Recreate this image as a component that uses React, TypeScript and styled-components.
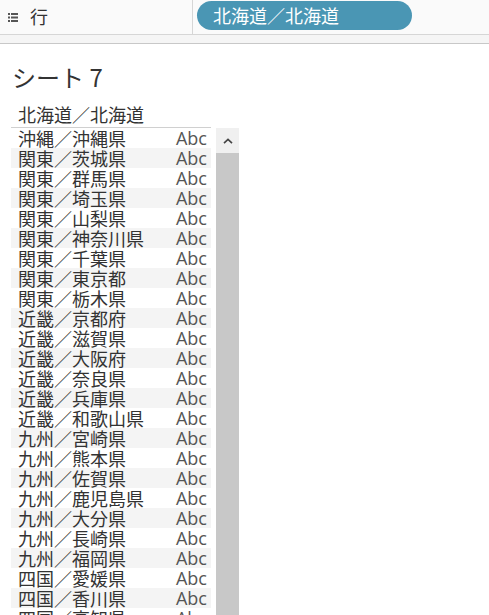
import styled, { createGlobalStyle } from 'styled-components';

const rows = [
    '沖縄／沖縄県',
    '関東／茨城県',
    '関東／群馬県',
    '関東／埼玉県',
    '関東／山梨県',
    '関東／神奈川県',
    '関東／千葉県',
    '関東／東京都',
    '関東／栃木県',
    '近畿／京都府',
    '近畿／滋賀県',
    '近畿／大阪府',
    '近畿／奈良県',
    '近畿／兵庫県',
    '近畿／和歌山県',
    '九州／宮崎県',
    '九州／熊本県',
    '九州／佐賀県',
    '九州／鹿児島県',
    '九州／大分県',
    '九州／長崎県',
    '九州／福岡県',
    '四国／愛媛県',
    '四国／香川県',
    '四国／高知県',
    '四国／徳島県',
];

export default function App() {
    return (
        <>
            <Global />
            <Page>
                <Shelf>
                    <ShelfLabel>
                        <svg width="10" height="9" viewBox="0 0 10 9">
                            <rect x="0" y="0" width="2" height="2" fill="#555" />
                            <rect x="3" y="0" width="7" height="2" fill="#555" />
                            <rect x="0" y="3.5" width="2" height="2" fill="#555" />
                            <rect x="3" y="3.5" width="7" height="2" fill="#555" />
                            <rect x="0" y="7" width="2" height="2" fill="#555" />
                            <rect x="3" y="7" width="7" height="2" fill="#555" />
                        </svg>
                        <span>行</span>
                    </ShelfLabel>
                    <ShelfBody>
                        <Pill>北海道／北海道</Pill>
                    </ShelfBody>
                </Shelf>
                <Band />
                <Sheet>
                    <Title>シート 7</Title>
                    <TableWrap>
                        <Table>
                            <Header>北海道／北海道</Header>
                            {rows.map((r, i) => (
                                <Row key={r} striped={i % 2 === 1}>
                                    <Name>{r}</Name>
                                    <Abc>Abc</Abc>
                                </Row>
                            ))}
                        </Table>
                        <Scroll>
                            <ScrollButton>
                                <svg width="10" height="6" viewBox="0 0 10 6">
                                    <path d="M1 5.2 L5 1.4 L9 5.2" fill="none" stroke="#444" strokeWidth="1.6" />
                                </svg>
                            </ScrollButton>
                            <Thumb />
                        </Scroll>
                    </TableWrap>
                </Sheet>
            </Page>
        </>
    );
}

const Global = createGlobalStyle`
    html, body {
        margin: 0;
        padding: 0;
        background: #fff;
        overflow: hidden;
    }
    body {
        font-family: "Noto Sans CJK JP", "Noto Sans", sans-serif;
        color: #333;
    }
`;

const Page = styled.div`
    width: 489px;
    height: 615px;
    overflow: hidden;
    display: flex;
    flex-direction: column;
`;

const Shelf = styled.div`
    height: 34px;
    flex-shrink: 0;
    display: flex;
    background: #fafafa;
    border-bottom: 1px solid #d6d6d6;
`;

const ShelfLabel = styled.div`
    width: 193px;
    border-right: 1px solid #d6d6d6;
    display: flex;
    align-items: center;
    gap: 12px;
    padding-left: 8px;
    box-sizing: border-box;
    font-size: 18px;
    color: #333;

    span {
        line-height: 1;
        margin-top: -2px;
    }
`;

const ShelfBody = styled.div`
    flex: 1;
    padding: 1px 0 0 4px;
`;

const Pill = styled.div`
    width: 215px;
    height: 29px;
    border-radius: 15px;
    background: #4a96b4;
    color: #fff;
    font-size: 18px;
    line-height: 29px;
    padding-left: 16px;
    box-sizing: border-box;
`;

const Band = styled.div`
    height: 8px;
    flex-shrink: 0;
    background: #f5f5f5;
    border-bottom: 1px solid #c8c8c8;
`;

const Sheet = styled.div`
    padding: 17px 0 0 11px;
`;

const Title = styled.div`
    font-size: 24px;
    line-height: 32px;
    height: 41px;
    color: #333;
    padding-left: 1px;
`;

const TableWrap = styled.div`
    display: flex;
    align-items: flex-start;
`;

const Table = styled.div`
    width: 200px;
`;

const Header = styled.div`
    font-size: 18px;
    line-height: 20px;
    height: 24px;
    padding-left: 7px;
    color: #333;
    border-bottom: 1px solid #d0d0d0;
    box-sizing: border-box;
    margin-top: 2px;
`;

const Row = styled.div<{ striped: boolean }>`
    height: 20px;
    display: flex;
    justify-content: space-between;
    align-items: center;
    background: ${({ striped }) => (striped ? '#f4f4f4' : '#fff')};
    padding: 0 4px 0 7px;
`;

const Name = styled.span`
    font-size: 18px;
    line-height: 20px;
    color: #333;
`;

const Abc = styled.span`
    font-family: "Open Sans", "Noto Sans", sans-serif;
    font-size: 18px;
    line-height: 20px;
    color: #555;
`;

const Scroll = styled.div`
    width: 23px;
    margin-left: 5px;
    margin-top: 26px;
    display: flex;
    flex-direction: column;
    background: #f0f0f0;
`;

const ScrollButton = styled.div`
    height: 25px;
    display: flex;
    align-items: center;
    justify-content: center;
`;

const Thumb = styled.div`
    height: 480px;
    background: #c8c8c8;
`;
